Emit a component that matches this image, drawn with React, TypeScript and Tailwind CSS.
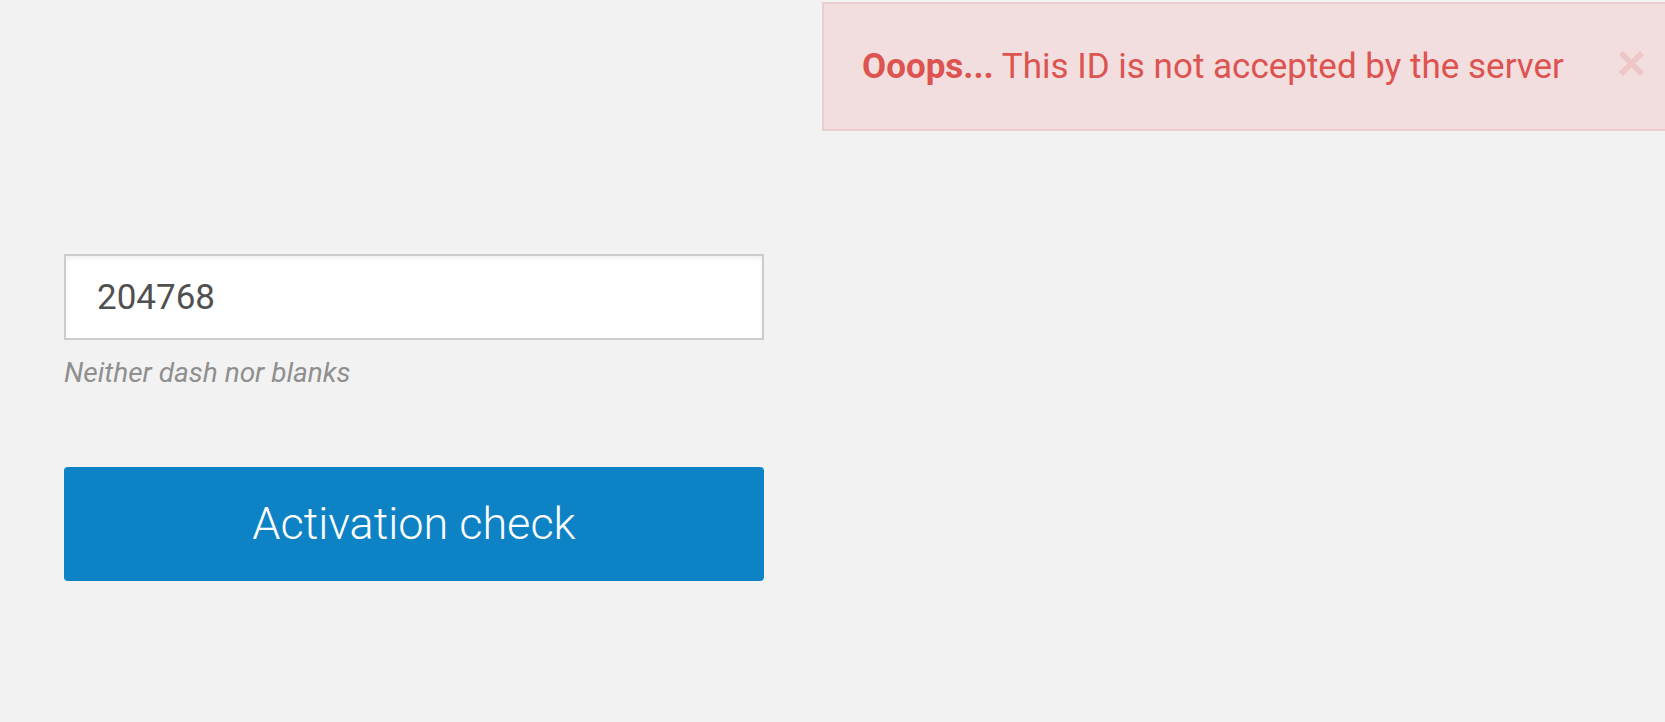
import { useState } from 'react';

export default function App() {
  const [code, setCode] = useState('204768');
  const [showError, setShowError] = useState(true);

  return (
    <div className="relative w-full h-screen overflow-hidden bg-[#f2f2f2] font-['Roboto',sans-serif]">
      {/* error toast */}
      {showError && (
        <div className="absolute top-[2px] left-[822px] w-[900px] h-[129px] flex items-center pl-[38px] bg-[#f2dede] border-2 border-[#ebccd1] text-[#dc5350]">
          <p className="text-[35px] leading-none whitespace-nowrap">
            <span className="font-bold">Ooops...</span> This ID is not accepted by the server
          </p>
          <button
            onClick={() => setShowError(false)}
            className="ml-[55px] mb-[6px] text-[#efc6c6]"
            aria-label="close"
          >
            <svg width="25" height="25" viewBox="0 0 25 25">
              <path d="M2 2 L23 23 M23 2 L2 23" stroke="currentColor" strokeWidth="5.5" />
            </svg>
          </button>
        </div>
      )}

      {/* form */}
      <div className="flex flex-col w-[700px] ml-[64px] pt-[254px]">
        <input
          value={code}
          onChange={(e) => setCode(e.target.value)}
          className="h-[86px] w-full bg-white border-2 border-[#cccccc] pl-[31px] text-[35px] text-[#505050] outline-none shadow-[inset_0_3px_4px_rgba(0,0,0,0.06)]"
        />
        <p className="mt-[16px] text-[28px] leading-[33px] italic text-[#8f8f8f]">Neither dash nor blanks</p>
        <button className="mt-[78px] h-[114px] w-full rounded bg-[#0d83c6] text-white text-[45px] font-light">
          Activation check
        </button>
      </div>
    </div>
  );
}
